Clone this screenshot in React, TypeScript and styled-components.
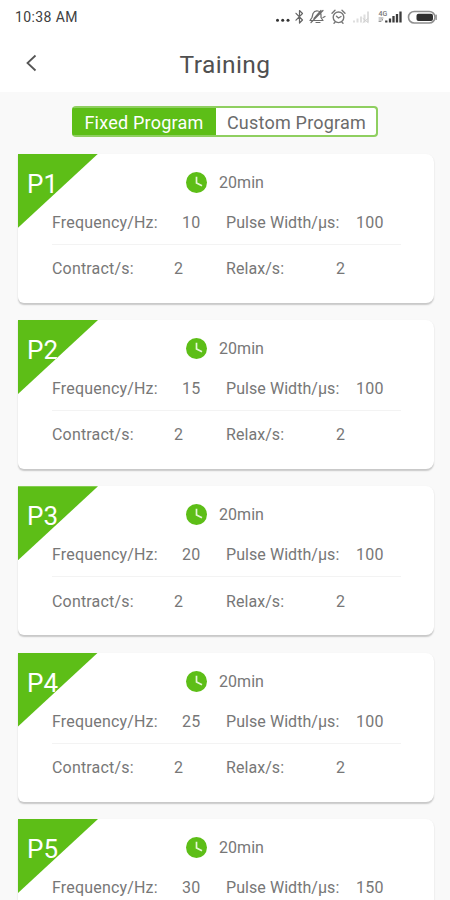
import React from "react";
import styled, { createGlobalStyle } from "styled-components";

const GREEN = "#5dbe17";

const GlobalStyle = createGlobalStyle`
  * { box-sizing: border-box; }
  body { margin: 0; background: #f9f9f9; font-family: Roboto, sans-serif; overflow: hidden; }
`;

const Screen = styled.main`
  width: 450px;
  height: 900px;
  overflow: hidden;
  background: #f9f9f9;
  color: #777;
`;

const StatusBar = styled.div`
  display: flex;
  align-items: center;
  justify-content: space-between;
  height: 34px;
  padding: 0 13px 0 15px;
  background: #fff;
`;

const Clock = styled.span`
  font-size: 14px;
  font-weight: 400;
  letter-spacing: 0.4px;
  color: #404040;
`;

const StatusIcons = styled.svg`
  display: block;
  width: 162px;
  height: 20px;
  margin-top: -2px;
`;

const Header = styled.header`
  display: grid;
  grid-template-columns: 60px 1fr 60px;
  align-items: center;
  height: 58px;
  background: #fff;
`;

const BackButton = styled.button`
  display: flex;
  align-items: center;
  height: 40px;
  padding: 0 0 0 25px;
  border: 0;
  background: none;
  color: #555;
`;

const Title = styled.h1`
  margin: 3px 0 0;
  text-align: center;
  font-size: 24.5px;
  font-weight: 400;
  letter-spacing: 0.4px;
  color: #505050;
`;

const Tabs = styled.div`
  display: flex;
  width: 306px;
  height: 31px;
  margin: 14px 0 16.7px 72px;
  border: 2px solid #8fcf60;
  border-left-color: ${GREEN};
  border-radius: 4px;
  background: ${GREEN};
  overflow: hidden;
`;

const Tab = styled.button<{ $active?: boolean }>`
  flex: 0 0 ${(p) => (p.$active ? 142 : 160)}px;
  padding: ${(p) => (p.$active ? "1px 2px 0 0" : "1px 0 0 1px")};
  border: 0;
  background: ${(p) => (p.$active ? GREEN : "#fff")};
  color: ${(p) => (p.$active ? "#fff" : "#6b6b6b")};
  font: 400 18px Roboto, sans-serif;
  letter-spacing: 0.22px;
  white-space: nowrap;
`;

const ProgramList = styled.div`
  display: flex;
  flex-direction: column;
  gap: 17.3px;
  padding: 0 16px 0 18px;
`;

const Card = styled.article`
  position: relative;
  flex: none;
  height: 149px;
  padding: 16px 33px 0 34px;
  border-radius: 0 8px 8px 6px;
  background: #fff;
  box-shadow: 0 1.5px 1.5px rgba(0, 0, 0, 0.2);
`;

const Ribbon = styled.div`
  position: absolute;
  top: 0;
  left: 0;
  width: 80px;
  height: 74px;
  padding: 15px 0 0 9px;
  background: ${GREEN};
  clip-path: polygon(0 0, 100% 0, 0 100%);
  color: #fff;
  font-size: 26px;
  line-height: 30px;
`;

const Duration = styled.div`
  display: flex;
  align-items: center;
  gap: 12px;
  height: 25px;
  padding-left: 134px;
  font-size: 16px;
  letter-spacing: 0.05px;
`;

const Metrics = styled.div<{ $ruled?: boolean }>`
  display: grid;
  grid-template-columns: ${(p) => (p.$ruled ? "130px 44px 130px 1fr" : "122px 52px 110px 1fr")};
  align-items: center;
  height: ${(p) => (p.$ruled ? 50 : 48)}px;
  padding-top: ${(p) => (p.$ruled ? 6 : 0)}px;
  border-bottom: ${(p) => (p.$ruled ? "1px solid #f3f3f3" : "0")};
  font-size: 16px;
  white-space: nowrap;
`;

const Label = styled.span<{ $tight?: boolean }>`
  letter-spacing: ${(p) => (p.$tight ? 0.06 : 0.18)}px;
`;

const Value = styled.span`
  letter-spacing: 0.2px;
`;

const programs = [
  { name: "P1", frequency: 10, pulse: 100 },
  { name: "P2", frequency: 15, pulse: 100 },
  { name: "P3", frequency: 20, pulse: 100 },
  { name: "P4", frequency: 25, pulse: 100 },
  { name: "P5", frequency: 30, pulse: 150 },
];

function DeviceStatus() {
  return (
    <StatusIcons viewBox="275 6 162 20" fill="none" strokeLinecap="round" strokeLinejoin="round">
      <g fill="#333">
        <circle cx="277.5" cy="20.3" r="1.5" />
        <circle cx="282.7" cy="20.3" r="1.5" />
        <circle cx="288" cy="20.3" r="1.5" />
      </g>
      <path d="m296 13.3 6.5 6.7-3 3V10.5l3 3-6.5 6.7" stroke="#666" strokeWidth="1.2" />
      <g stroke="#6c6c6c" strokeWidth="1.2">
        <path d="M312 20.5h11l-2-3v-3c0-4-6-5-8-1l-1 4-2 3h2M316 22.5h4M311 22.5l12-12M314 18.5l7-8M323 17.5l2-1" />
      </g>
      <g stroke="#777" strokeWidth="1.4">
        <circle cx="338.5" cy="17.3" r="5.3" />
        <path d="m332 13.3 3-3M342 10.3l3 3M336.5 16.3l2 1.7 2.5-1.5M335 22.3l-1 1M342 22.3l1 1" />
      </g>
      <g stroke="#dedede" strokeWidth="2" strokeLinecap="butt">
        <path d="M354 22.5v-2M357.5 22.5v-4M361 22.5v-6M364.5 22.5v-8M368 22.5V11.5" />
      </g>
      <path d="m363 18.5 5 4M368 18.5l-5 4" stroke="#d0d0d0" />
      <text x="378.5" y="15.5" fill="#777" fontSize="7" fontFamily="Roboto, sans-serif" fontWeight="500">4G</text>
      <path d="M379 20h4l-1-1M383 18h-4M379 21.5h2" stroke="#999" />
      <g stroke="#3c3c3c" strokeWidth="2.3" strokeLinecap="butt">
        <path d="M386.3 22.5v-2M390 22.5v-4" />
        <path d="M393.5 22.5v-6.5M397 22.5v-8.5M400.5 22.5V11.5" />
      </g>
      <rect x="408.5" y="11.5" width="26.5" height="11.5" rx="5.75" stroke="#909090" strokeWidth="1.6" />
      <path d="M436.2 15v4.5" stroke="#888" strokeWidth="1.2" />
      <rect x="416.5" y="13.7" width="16.5" height="7.2" rx="2" fill="#303030" />
    </StatusIcons>
  );
}

function ClockIcon() {
  return (
    <svg width="21" height="21" viewBox="0 0 21 21">
      <circle cx="10.5" cy="10.5" r="10.5" fill={GREEN} />
      <path d="M10.5 4.7v6.2l5.5 2.8" fill="none" stroke="#e5f7d8" strokeWidth="1.7" />
    </svg>
  );
}

export default function App() {
  return (
    <>
      <GlobalStyle />
      <Screen>
        <StatusBar>
          <Clock>10:38 AM</Clock>
          <DeviceStatus />
        </StatusBar>
        <Header>
          <BackButton aria-label="Back">
            <svg width="12" height="18" viewBox="0 0 12 18" fill="none">
              <path d="M10.5 1.5 2.5 9l8 7.5" stroke="currentColor" strokeWidth="1.8" />
            </svg>
          </BackButton>
          <Title>Training</Title>
        </Header>
        <Tabs>
          <Tab $active>Fixed Program</Tab>
          <Tab>Custom Program</Tab>
        </Tabs>
        <ProgramList>
          {programs.map((program) => (
            <Card key={program.name}>
              <Ribbon>{program.name}</Ribbon>
              <Duration>
                <ClockIcon />
                <span>20min</span>
              </Duration>
              <Metrics $ruled>
                <Label>Frequency/Hz:</Label>
                <Value>{program.frequency}</Value>
                <Label $tight>Pulse Width/μs:</Label>
                <Value>{program.pulse}</Value>
              </Metrics>
              <Metrics>
                <Label>Contract/s:</Label>
                <Value>2</Value>
                <Label $tight>Relax/s:</Label>
                <Value>2</Value>
              </Metrics>
            </Card>
          ))}
        </ProgramList>
      </Screen>
    </>
  );
}
